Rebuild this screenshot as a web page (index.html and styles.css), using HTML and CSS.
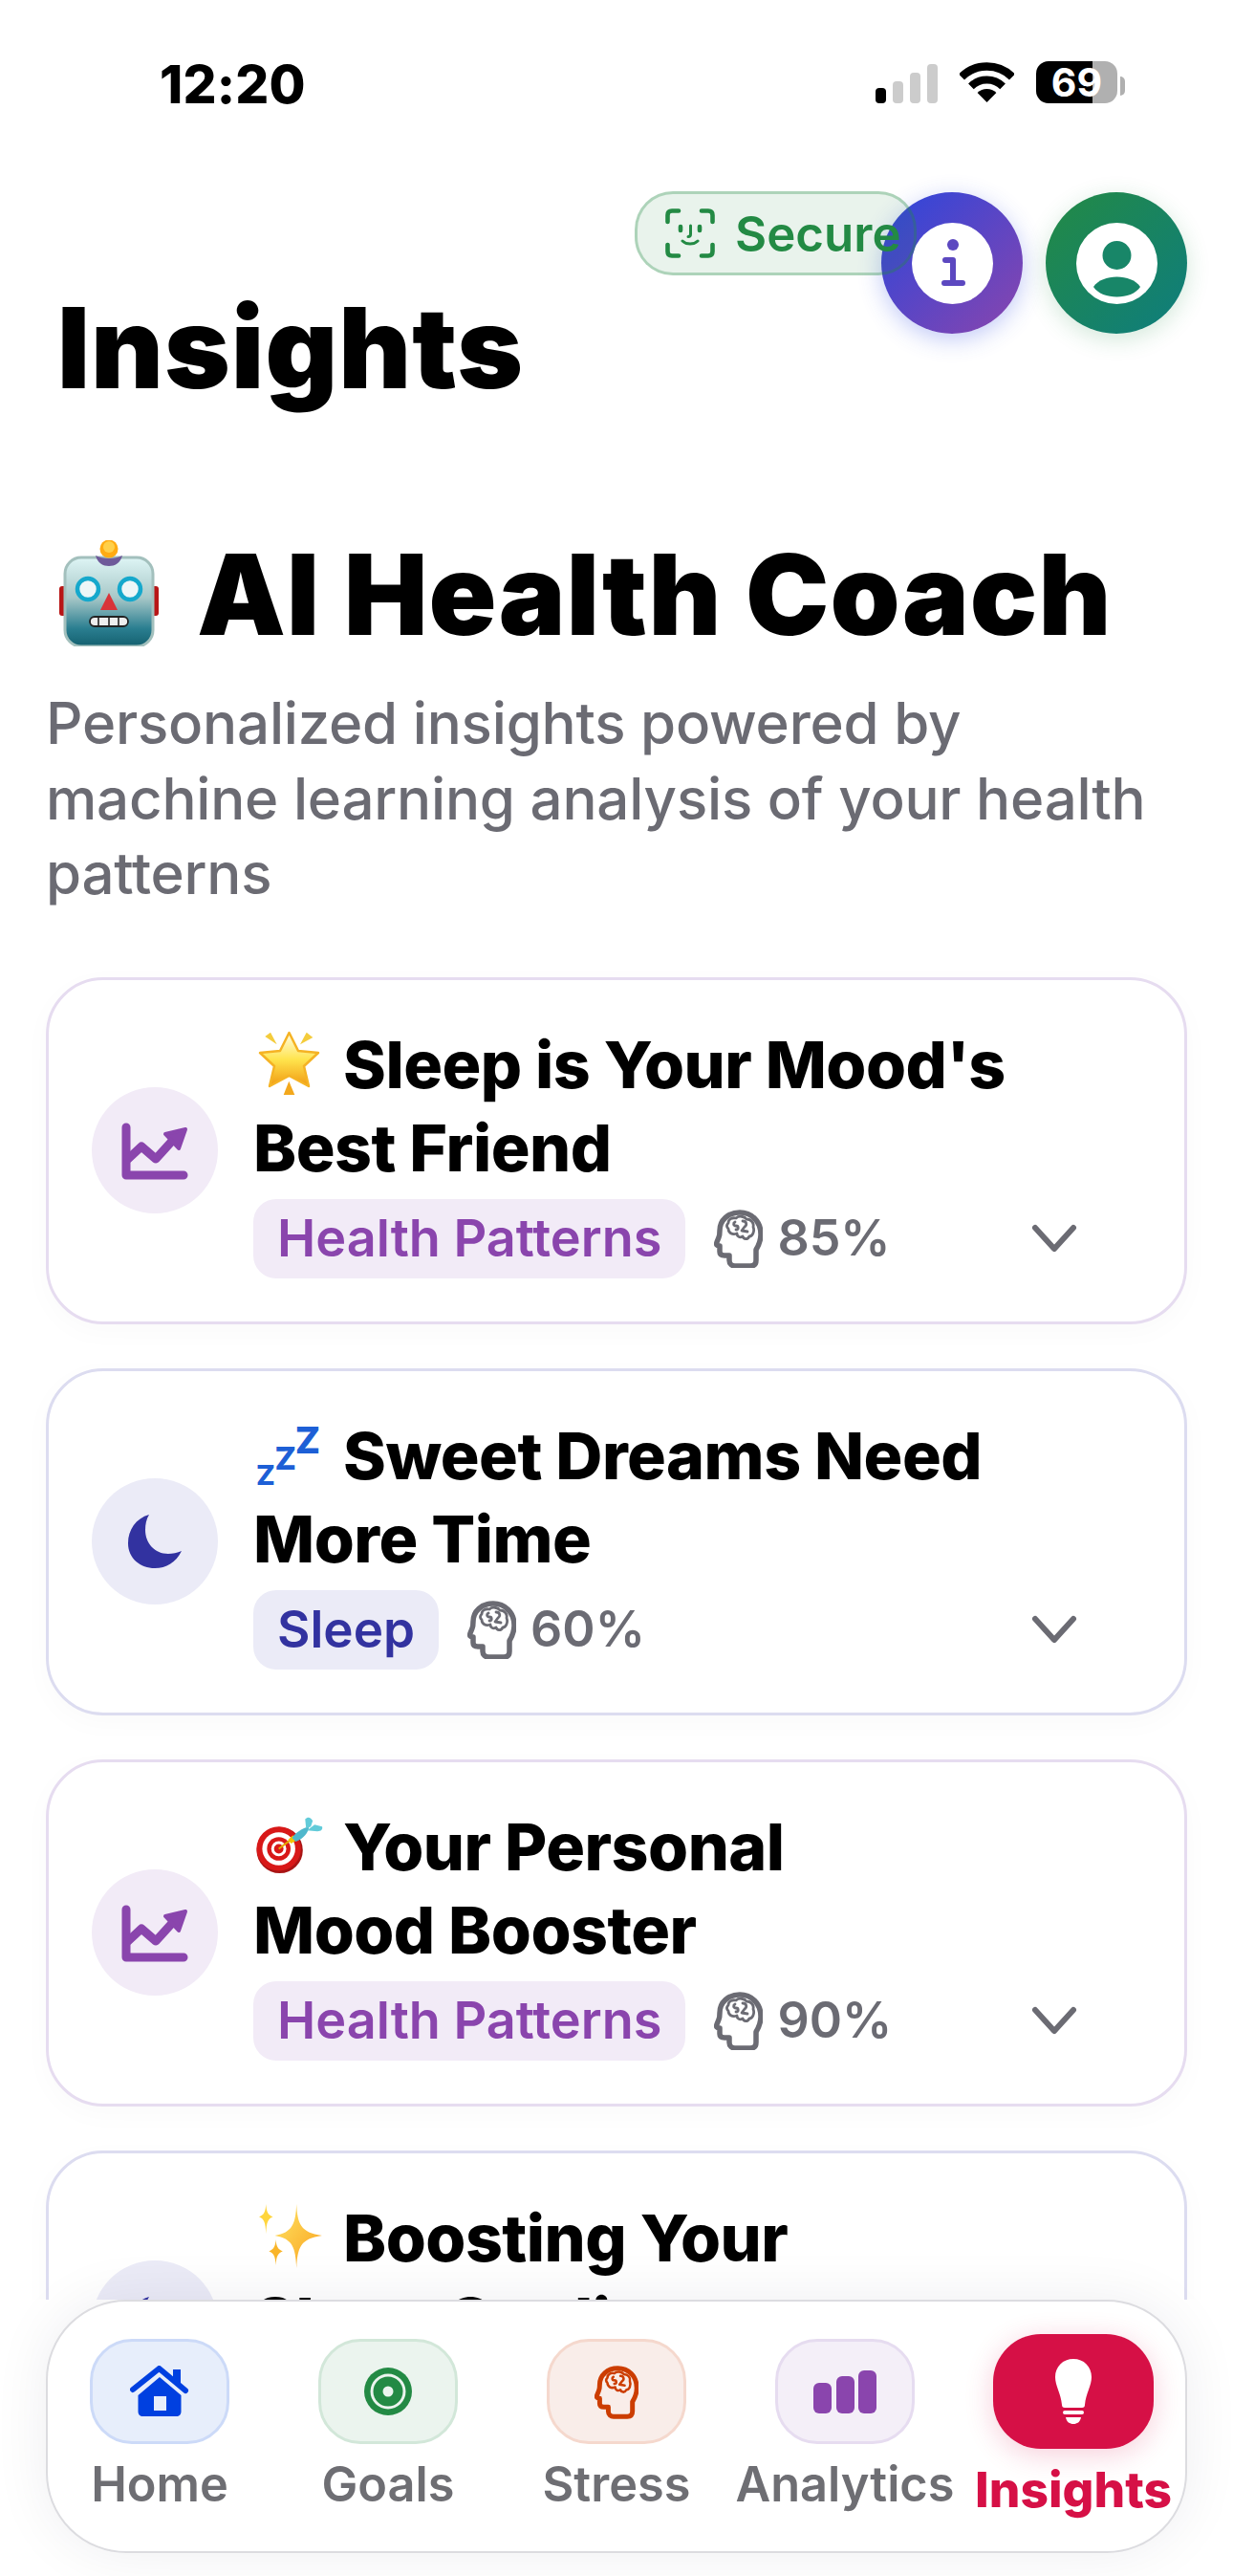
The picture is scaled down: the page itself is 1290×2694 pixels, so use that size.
FILE: index.html
```html
<!DOCTYPE html>
<html lang="en">
<head>
<meta charset="utf-8">
<title>Insights</title>
<link rel="stylesheet" href="styles.css">
</head>
<body>
<svg class="defs" width="0" height="0" aria-hidden="true">
  <defs>
    <symbol id="head" viewBox="0 0 51 61">
      <path fill="none" stroke="currentColor" stroke-width="5.5" stroke-linejoin="round" d="M44 42C47 37 49 32 49 26 49 12 39 3 27 3 15 3 6 11 6 22 6 25 6 27 5 29L3 34C2 37 3 38 6 38V44C6 47 8 48 11 48H16V53C16 57 19 59 22 59H38C42 59 44 57 44 53Z"/>
      <g fill="none" stroke="currentColor" stroke-width="2.8" stroke-linecap="round" stroke-linejoin="round">
        <path d="M15 14C15 10 19 8 23 9 26 6 32 7 34 10 39 10 42 14 41 18 43 23 40 28 37 28 35 32 31 31 30 28 27 30 24 28 24 25 19 27 15 24 15 20 13 18 13 16 15 14Z"/>
        <path d="M22 13C20 14 20 17 23 17 26 17 26 21 23 21M30 12C34 12 35 16 32 18L29 22 35 23"/>
      </g>
    </symbol>
    <symbol id="chart" viewBox="0 0 70 60">
      <path fill="none" stroke="currentColor" stroke-width="9" stroke-linecap="round" stroke-linejoin="round" d="M5 5V55H65"/>
      <path fill="none" stroke="currentColor" stroke-width="9" stroke-linecap="round" stroke-linejoin="round" d="M7 38 21 25 36 38 56 16"/>
      <path fill="currentColor" stroke="currentColor" stroke-width="4" stroke-linejoin="round" d="M67 7 46 12 60 27Z"/>
    </symbol>
    <symbol id="moon" viewBox="0 0 60 60">
      <path fill="currentColor" d="M24 2C10 6 2 18 2 32 2 48 15 58 30 58 42 58 52 52 58 40 54 42 48 43 44 43 30 43 20 32 20 18 20 12 21 7 24 2Z"/>
    </symbol>
    <symbol id="chev" viewBox="0 0 48 30">
      <path fill="none" stroke="currentColor" stroke-width="6" stroke-linecap="round" stroke-linejoin="round" d="M4 4 24 26 44 4"/>
    </symbol>
    <linearGradient id="starfill" x1="0" y1="0" x2="0" y2="1">
      <stop offset="0" stop-color="#fffde8"/><stop offset=".5" stop-color="#ffe44d"/><stop offset="1" stop-color="#f09a12"/>
    </linearGradient>
    <linearGradient id="robotfill" x1="0" y1="0" x2="0" y2="1">
      <stop offset="0" stop-color="#def5f5"/><stop offset=".45" stop-color="#a8c8c8"/><stop offset=".8" stop-color="#2a7e90"/><stop offset="1" stop-color="#14606f"/>
    </linearGradient>
    <linearGradient id="sparkfill" x1="0" y1="0" x2="1" y2="1">
      <stop offset="0" stop-color="#ffe566"/><stop offset="1" stop-color="#f9a01b"/>
    </linearGradient>
  </defs>
</svg>

<div class="app">
  <main class="scroll">
    <div class="status">
      <span class="time">12:20</span>
      <div class="status-icons">
        <div class="signal">
          <i class="bar b1"></i><i class="bar b2"></i><i class="bar b3"></i><i class="bar b4"></i>
        </div>
        <svg class="wifi" viewBox="0 0 57 42">
          <g fill="none" stroke="#000">
            <path stroke-width="8.5" d="M2 15.5A37.5 37.5 0 0 1 55 15.5"/>
            <path stroke-width="8" d="M11.9 25.4A23.5 23.5 0 0 1 45.1 25.4"/>
          </g>
          <path d="M28.5 42 18.6 32.1A14 14 0 0 1 38.4 32.1Z"/>
        </svg>
        <div class="battery">69</div>
      </div>
    </div>

    <header class="head">
      <div class="actions">
        <div class="secure">
          <svg class="faceid" viewBox="0 0 52 52">
            <g fill="none" stroke="currentColor" stroke-width="4.6" stroke-linecap="round" stroke-linejoin="round">
              <path d="M2.5 14V7C2.5 4 4 2.5 7 2.5H14M38 2.5H45C48 2.5 49.5 4 49.5 7V14M2.5 38V45C2.5 48 4 49.5 7 49.5H14M38 49.5H45C48 49.5 49.5 48 49.5 45V38"/>
              <path d="M16 19V23M36 19V23"/>
              <path stroke-width="3" d="M26.5 18V27C26.5 29 25.5 29.5 24 29.5M18 34C22 38 30 38 34 34"/>
            </g>
          </svg>
          <span class="secure-text">Secure</span>
        </div>
        <button class="round info" type="button">
          <svg class="round-icon" viewBox="0 0 85 85">
            <circle cx="42.5" cy="42.5" r="42.5" fill="#fff"/>
            <circle cx="43" cy="23" r="6" fill="#5c48c0"/>
            <path fill="none" stroke="#5c48c0" stroke-width="6" stroke-linecap="round" stroke-linejoin="round" d="M35 39H43V63M34 63H53"/>
          </svg>
        </button>
        <button class="round profile" type="button">
          <svg class="round-icon" viewBox="0 0 85 85">
            <circle cx="42.5" cy="42.5" r="42.5" fill="#fff"/>
            <circle cx="42.5" cy="34" r="15" fill="#188668"/>
            <path fill="#188668" d="M18 67C27 53 58 53 67 67 58 81 27 81 18 67Z"/>
          </svg>
        </button>
      </div>
      <h1 class="page-title">Insights</h1>
    </header>

    <section class="intro">
      <h2 class="coach">
        <svg class="robot" viewBox="0 0 108 111">
          <rect x="2" y="48" width="8" height="31" rx="3" fill="#b81616"/>
          <rect x="98" y="48" width="8" height="31" rx="3" fill="#b81616"/>
          <rect x="8" y="18" width="92" height="93" rx="17" fill="url(#robotfill)"/>
          <rect x="8" y="18" width="92" height="93" rx="17" fill="none" stroke="#a3c0bd" stroke-width="3"/>
          <path d="M40 16C48 20 60 20 68 16 66 24 60 27 54 27 48 27 42 24 40 16Z" fill="#6e5a9a"/>
          <circle cx="54" cy="9" r="9.5" fill="#ffab12"/>
          <circle cx="54" cy="7" r="6" fill="#ffd04a"/>
          <circle cx="32" cy="51" r="11" fill="#eef6f7" stroke="#16a8cc" stroke-width="4.5"/>
          <circle cx="76" cy="51" r="11" fill="#eef6f7" stroke="#16a8cc" stroke-width="4.5"/>
          <path d="M54 55 63 73H45Z" fill="#d8343a"/>
          <rect x="34" y="80" width="40" height="10" rx="5" fill="#eee" stroke="#222" stroke-width="1.8"/>
          <path d="M43 80V90M54 80V90M64 80V90" stroke="#222" stroke-width="1.6"/>
        </svg>
        <span>AI Health Coach</span>
      </h2>
      <p class="lead">Personalized insights powered by machine learning analysis of your health patterns</p>
    </section>

    <section class="cards">
      <article class="card purple">
        <div class="disc"><svg class="disc-chart"><use href="#chart"/></svg></div>
        <div class="body">
          <h3 class="card-title">
            <svg class="emoji" viewBox="0 0 64 68">
              <path fill="#f4cc3c" d="M6.3 6 12 1.7 18.7 14.3ZM43 14.3 49.7 1.7 56.3 7Z"/>
              <path fill="#f3a81c" d="M31.3 52.7 37.3 67H25.7Z"/>
              <path fill="url(#starfill)" stroke="#f5b324" stroke-width="2.5" stroke-linejoin="round" d="M31.5 2 41 21 62 23 47 37 52 58 31.5 47 11 58 16 37 1 23 22 21Z"/>
            </svg><span>Sleep is Your Mood's</span><br>Best Friend
          </h3>
          <div class="meta">
            <span class="tag">Health Patterns</span>
            <svg class="brain"><use href="#head"/></svg>
            <span class="pct">85%</span>
            <svg class="chevron"><use href="#chev"/></svg>
          </div>
        </div>
      </article>

      <article class="card indigo">
        <div class="disc"><svg class="disc-moon"><use href="#moon"/></svg></div>
        <div class="body">
          <h3 class="card-title">
            <svg class="emoji" viewBox="0 0 72 68" aria-hidden="true">
              <g class="zzz">
                <text x="0" y="67" font-size="30">Z</text>
                <text x="20" y="50" font-size="34">Z</text>
                <text x="42" y="33" font-size="40">Z</text>
              </g>
            </svg><span>Sweet Dreams Need</span><br>More Time
          </h3>
          <div class="meta">
            <span class="tag">Sleep</span>
            <svg class="brain"><use href="#head"/></svg>
            <span class="pct">60%</span>
            <svg class="chevron"><use href="#chev"/></svg>
          </div>
        </div>
      </article>

      <article class="card purple">
        <div class="disc"><svg class="disc-chart"><use href="#chart"/></svg></div>
        <div class="body">
          <h3 class="card-title">
            <svg class="emoji" viewBox="0 0 71 62">
              <circle cx="25" cy="36" r="24.5" fill="#a81414"/>
              <circle cx="24" cy="34.5" r="23.5" fill="#d81818"/>
              <circle cx="24" cy="34.5" r="17.5" fill="#fff"/>
              <circle cx="24" cy="34.5" r="12.5" fill="#d81818"/>
              <circle cx="24" cy="34.5" r="8" fill="#fff"/>
              <circle cx="24" cy="34.5" r="5" fill="#d81818"/>
              <path d="M24 34.5 38 24" stroke="#e5a800" stroke-width="2"/>
              <path fill="#f2c400" d="M34 25 39 20 42 26 37 29Z"/>
              <path fill="#4fb7cc" d="M38 23C42 17 49 13 56 11 56 17 50 24 42 27Z"/>
              <path fill="#62cbd9" d="M53 13 52 3C55 0 58 1 60 5L58 11ZM54 15 62 9 70 11C71 14 69 16 65 16Z"/>
            </svg><span>Your Personal</span><br>Mood Booster
          </h3>
          <div class="meta">
            <span class="tag">Health Patterns</span>
            <svg class="brain"><use href="#head"/></svg>
            <span class="pct">90%</span>
            <svg class="chevron"><use href="#chev"/></svg>
          </div>
        </div>
      </article>

      <article class="card indigo">
        <div class="disc"><svg class="disc-moon"><use href="#moon"/></svg></div>
        <div class="body">
          <h3 class="card-title">
            <svg class="emoji" viewBox="0 0 66 66">
              <path fill="url(#sparkfill)" d="M40 0C41 20 44 29 66 32 44 35 41 44 40 65 39 44 36 35 18 32 36 29 39 20 40 0Z"/>
              <path fill="#ffd53d" d="M9 0C9.5 8 11 11 16 13 11 15 9.5 18 9 30 8.5 18 7 15 2 13 7 11 8.5 8 9 0Z"/>
              <path fill="#f9b52a" d="M19 36C19.5 43 21 46 26 48 21 50 19.5 53 19 62 18.500 53 17 50 12 48 17 46 18.500 43 19 36Z"/>
            </svg><span>Boosting Your</span><br>Sleep Quality
          </h3>
          <div class="meta">
            <span class="tag">Sleep</span>
            <svg class="brain"><use href="#head"/></svg>
            <span class="pct">75%</span>
            <svg class="chevron"><use href="#chev"/></svg>
          </div>
        </div>
      </article>
    </section>
  </main>

  <div class="nav-wrap">
    <nav class="nav">
      <a class="nav-item">
        <span class="tile t-home">
          <svg class="ico-home" viewBox="0 0 62 54">
            <path fill="#0040e0" d="M45 4H53V20L45 12Z"/>
            <path fill="none" stroke="#0040e0" stroke-width="6" stroke-linecap="round" stroke-linejoin="round" d="M3 25 30.500 3 58 26"/>
            <path fill="#0040e0" fill-rule="evenodd" d="M8.500 31 31 12 53.500 31V48C53.500 51 51.500 53 48.500 53H13.500C10.500 53 8.500 51 8.500 48ZM25 32V47H38V32Z"/>
          </svg>
        </span>
        <span class="label">Home</span>
      </a>
      <a class="nav-item">
        <span class="tile t-goals">
          <svg class="ico-target" viewBox="0 0 50 50">
            <circle cx="25" cy="25" r="25" fill="#238a44"/>
            <circle cx="25" cy="25" r="18.500" fill="#ebf4ee"/>
            <circle cx="25" cy="25" r="15.500" fill="#238a44"/>
            <circle cx="25" cy="25" r="5.500" fill="#ebf4ee"/>
          </svg>
        </span>
        <span class="label">Goals</span>
      </a>
      <a class="nav-item">
        <span class="tile t-stress"><svg class="ico-head"><use href="#head"/></svg></span>
        <span class="label">Stress</span>
      </a>
      <a class="nav-item">
        <span class="tile t-analytics">
          <span class="bars"><i class="col c1"></i><i class="col c2"></i><i class="col c3"></i></span>
        </span>
        <span class="label">Analytics</span>
      </a>
      <a class="nav-item active">
        <span class="tile t-insights">
          <svg class="ico-bulb" viewBox="0 0 38 68">
            <path fill="#fff" d="M19 0C30 0 38 8 38 19 38 28 32 36 31 48 31 50 30 51 28 51H10C8 51 7 50 7 48 6 36 0 28 0 19 0 8 8 0 19 0Z"/>
            <rect x="8" y="54" width="22" height="4" rx="2" fill="#fff"/>
            <path fill="#fff" d="M11 61H27C26 66 23 68 19 68 15 68 12 66 11 61Z"/>
          </svg>
        </span>
        <span class="label">Insights</span>
      </a>
    </nav>
  </div>
</div>
</body>
</html>
```

FILE: styles.css
```css
* { box-sizing: border-box; }
html, body { margin: 0; padding: 0; background: #fff; }
body { font-family: Inter, "Liberation Sans", sans-serif; color: #000; }
.defs { position: absolute; }

.app { width: 1290px; height: 2694px; display: flex; flex-direction: column; overflow: hidden; }
.scroll { flex: 1; min-height: 0; overflow: hidden; }

/* status bar */
.status { display: flex; justify-content: space-between; align-items: center; height: 60px; margin-top: 58px; padding: 0 121px 0 167px; }
.time { font-size: 55px; font-weight: 800; line-height: 60px; letter-spacing: 0.2px; }
.status-icons { display: flex; align-items: center; height: 44px; margin-top: -4px; }
.signal { display: flex; align-items: flex-end; gap: 7px; height: 41px; margin-top: 2px; }
.bar { display: block; width: 11px; border-radius: 4px; background: #ccc; }
.b1 { height: 16px; background: #000; }
.b2 { height: 23px; }
.b3 { height: 32px; }
.b4 { height: 41px; }
.wifi { width: 57px; height: 42px; margin-left: 23px; }
.battery { position: relative; width: 85px; height: 44px; margin-left: 23px; border-radius: 13px; background: linear-gradient(90deg, #000 0 59px, #b0b0b0 59px); color: #fff; font-size: 41px; font-weight: 700; line-height: 44px; text-align: center; }
.battery::after { content: ""; position: absolute; left: 88px; top: 16px; width: 5px; height: 20px; border-radius: 0 5px 5px 0; background: #b0b0b0; }

/* header */
.head { padding: 0 48px; }
.actions { display: flex; justify-content: flex-end; align-items: flex-start; margin-top: 83px; }
.secure { position: relative; z-index: 1; display: flex; align-items: center; gap: 21px; width: 295px; height: 88px; margin-top: -1px; margin-right: -37px; padding-left: 29px; border: 3px solid rgba(35, 138, 68, 0.3); border-radius: 40px; background: rgba(35, 138, 68, 0.1); color: #238a44; font-size: 51px; font-weight: 600; line-height: 60px; white-space: nowrap; }
.secure-text { padding-top: 2px; }
.faceid { width: 52px; height: 52px; flex: none; }
.round { display: flex; align-items: center; justify-content: center; width: 148px; height: 148px; padding: 0; border: 0; border-radius: 50%; }
.round-icon { width: 85px; height: 85px; }
.info { background: linear-gradient(135deg, #2b46dc, #8a45ad); box-shadow: 0 6px 24px rgba(50, 80, 230, 0.3); }
.profile { margin-left: 24px; background: linear-gradient(135deg, #238a44, #0e7d7e); box-shadow: 0 6px 24px rgba(35, 138, 68, 0.2); }
.page-title { margin: -45px 0 0 12px; font-size: 117px; font-weight: 900; line-height: 120px; letter-spacing: 1px; }

/* intro */
.intro { padding: 0 48px; }
.coach { display: flex; align-items: flex-start; gap: 38px; margin: 133px 0 0 12px; font-size: 117px; font-weight: 900; line-height: 130px; letter-spacing: 1.1px; white-space: nowrap; }
.robot { width: 108px; height: 111px; margin-top: 8px; flex: none; }
.lead { margin: 30px 0 0; color: #6b6b73; font-size: 60px; font-weight: 500; line-height: 78.5px; letter-spacing: -0.2px; }

/* cards */
.cards { display: flex; flex-direction: column; gap: 46px; margin-top: 69px; padding: 0 48px; }
.card { display: flex; align-items: center; gap: 37px; height: 363px; flex: none; padding: 0 45px; border: 3px solid #e6dcf0; border-radius: 60px; background: #fff; box-shadow: 0 8px 30px rgba(0, 0, 0, 0.025); }
.card.indigo { border-color: #dcdcf0; }
.disc { display: flex; align-items: center; justify-content: center; width: 132px; height: 132px; flex: none; border-radius: 50%; }
.purple .disc, .purple .tag { background: #f2ebf7; color: #8a45ad; }
.indigo .disc, .indigo .tag { background: #ebebf7; color: #3232a0; }
.indigo .tag { font-size: 53px; }
.disc-chart { width: 70px; height: 60px; margin-top: 2px; }
.disc-moon { width: 60px; height: 60px; }
.body { flex: 1; min-width: 0; }
.card-title { margin: 0; font-size: 68px; font-weight: 800; line-height: 87px; letter-spacing: -0.5px; white-space: nowrap; }
.emoji { display: inline-block; width: 70px; height: 68px; margin: 0 21px 0 3px; vertical-align: -8px; }
.zzz { fill: #1d5fd6; font-family: Inter, sans-serif; font-weight: 800; }
.meta { display: flex; align-items: center; height: 83px; margin-top: 10px; padding-right: 67px; }
.tag { display: flex; align-items: center; height: 83px; padding: 0 25px; border-radius: 24px; font-size: 54px; font-weight: 600; line-height: 60px; white-space: nowrap; }
.brain { width: 51px; height: 61px; margin-left: 30px; flex: none; color: #6b6b73; }
.pct { margin-left: 15px; color: #6b6b73; font-size: 52px; font-weight: 600; line-height: 60px; }
.chevron { width: 48px; height: 30px; margin-left: auto; flex: none; color: #6b6b73; }

/* bottom nav */
.nav-wrap { position: relative; z-index: 2; padding: 0 48px 24px; }
.nav { display: grid; grid-template-columns: repeat(5, 239px); justify-content: center; height: 265px; padding-top: 39px; border: 2px solid #dcdce0; border-radius: 84px; background: #fff; box-shadow: 0 0 60px rgba(20, 20, 60, 0.07); }
.nav-item { display: flex; flex-direction: column; align-items: center; min-width: 0; }
.tile { display: flex; align-items: center; justify-content: center; width: 146px; height: 110px; flex: none; border: 3px solid; border-radius: 44px; }
.t-home { background: #e7eefb; border-color: #ccdaf8; }
.t-goals { background: #ebf4ee; border-color: #d2e7d9; }
.t-stress { background: #f9ede9; border-color: #f5d8cd; color: #cc3d00; }
.t-analytics { background: #f4eff8; border-color: #e6dcf0; }
.t-insights { width: 168px; height: 120px; margin-top: -5px; border: 0; border-radius: 50px; background: #d61046; box-shadow: 0 6px 30px rgba(214, 16, 70, 0.2); }
.ico-home { width: 62px; height: 54px; }
.ico-target { width: 50px; height: 50px; }
.ico-head { width: 46px; height: 59px; }
.ico-bulb { width: 38px; height: 68px; }
.bars { display: flex; align-items: flex-end; gap: 4.5px; }
.col { display: block; width: 19px; border-radius: 6px; background: #8a45ad; }
.c1 { height: 32px; }
.c2 { height: 38.5px; }
.c3 { height: 45px; }
.label { margin-top: 12px; color: #6e6e73; font-size: 50.5px; font-weight: 600; line-height: 60px; white-space: nowrap; }
.active .label { color: #d61046; font-size: 51.5px; font-weight: 800; }
```
